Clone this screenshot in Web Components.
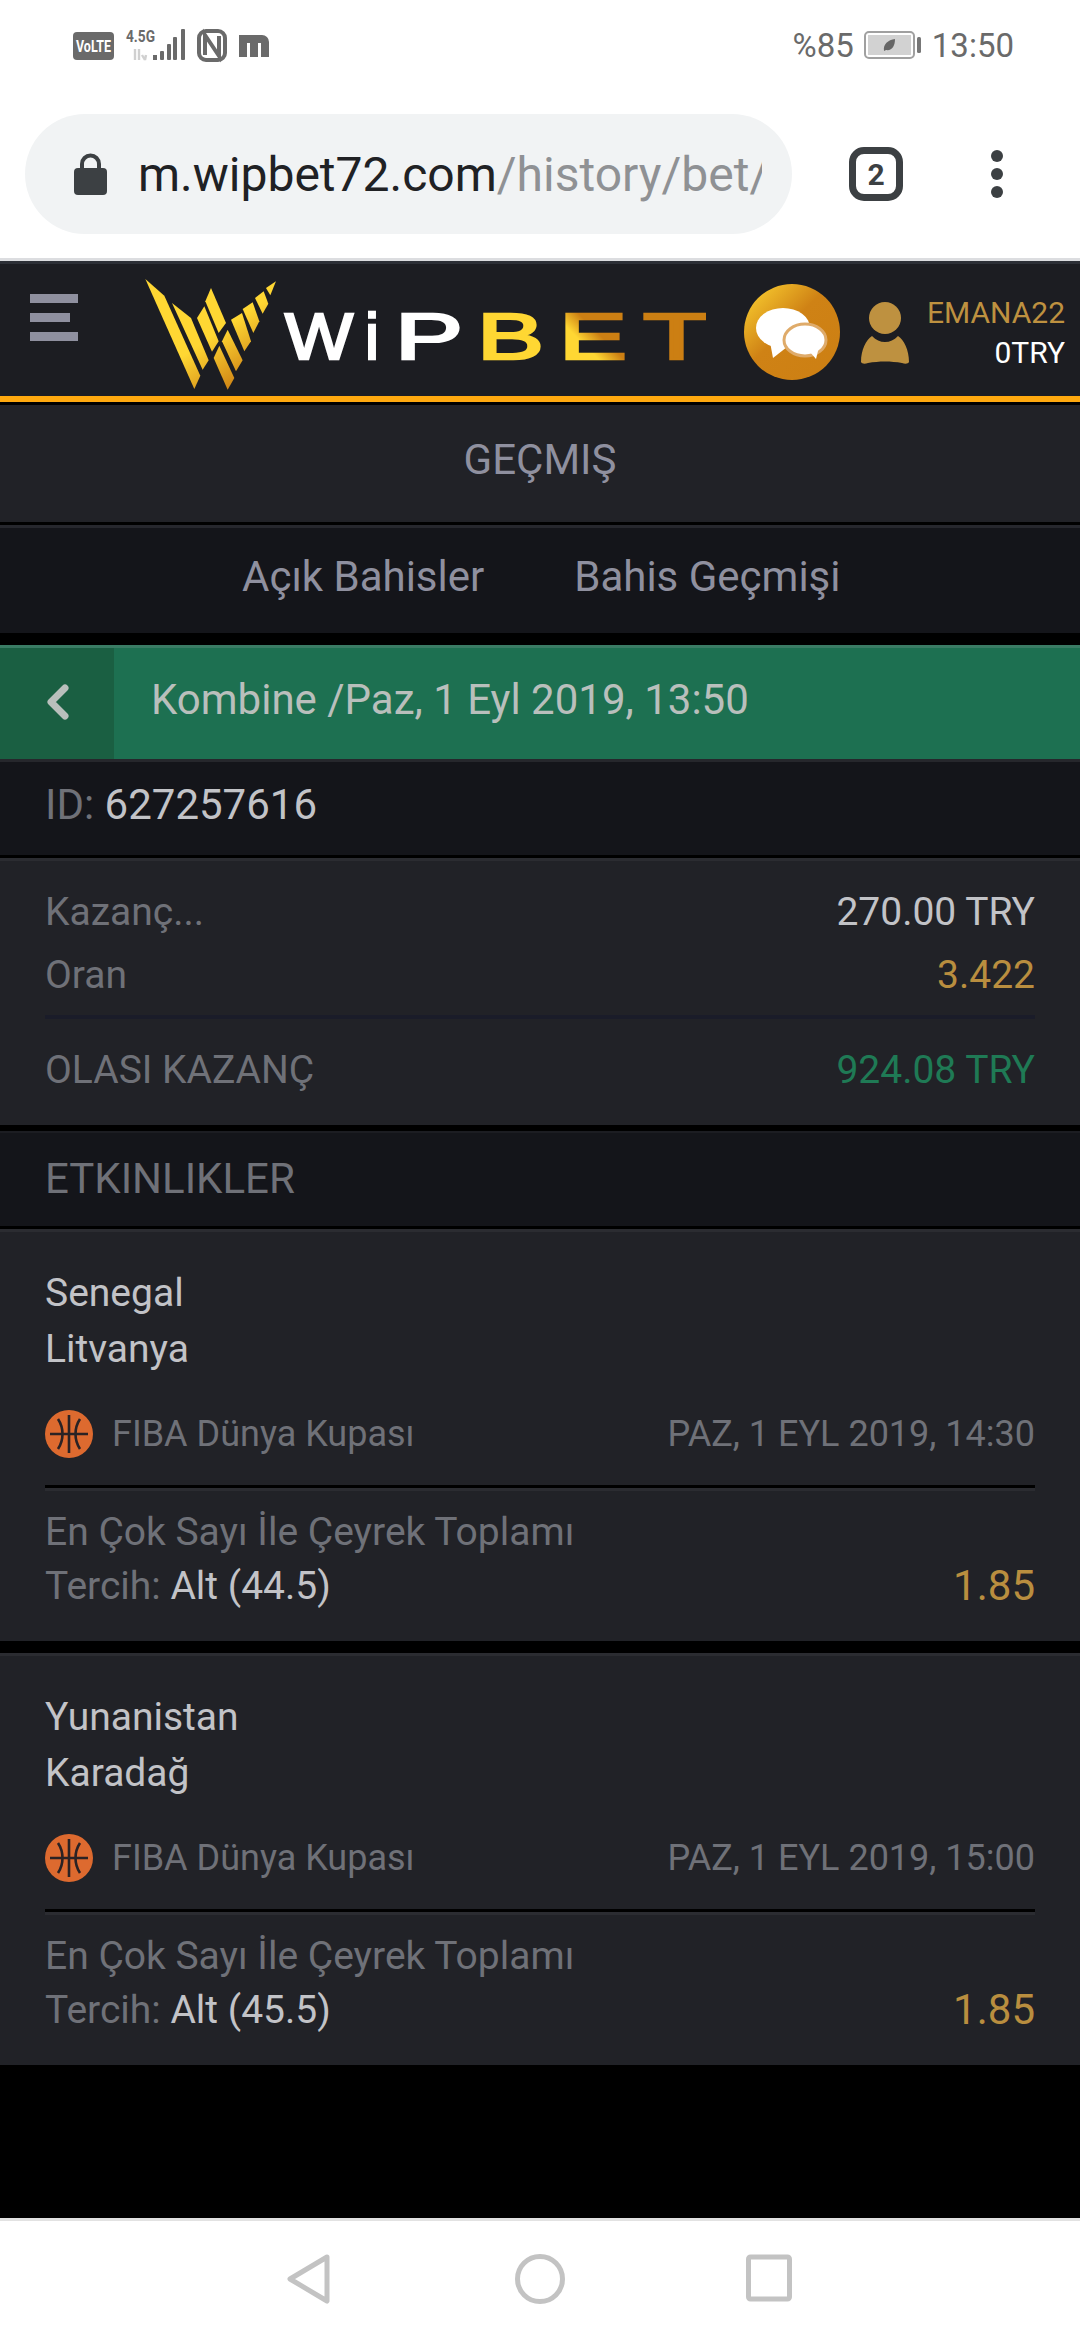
<!DOCTYPE html>
<html lang="tr">
<head>
<meta charset="utf-8">
<title>Bahis Geçmişi</title>
<style>
  html, body { margin: 0; padding: 0; background: #000; }
  body {
    width: 1080px;
    height: 2340px;
    display: flex;
    flex-direction: column;
    overflow: hidden;
    font-family: Roboto, "Liberation Sans", sans-serif;
  }
  main { flex: 1; display: block; background: #000; }
</style>
</head>
<body>
  <status-bar></status-bar>
  <url-bar></url-bar>
  <site-header></site-header>
  <main>
    <page-title>GEÇMIŞ</page-title>
    <tab-row></tab-row>
    <bet-heading>Kombine /Paz, 1 Eyl 2019, 13:50</bet-heading>
    <bet-id>627257616</bet-id>
    <bet-summary></bet-summary>
    <section-title>ETKINLIKLER</section-title>
    <event-card home="Senegal" away="Litvanya" date="PAZ, 1 EYL 2019, 14:30" pick="Alt (44.5)"></event-card>
    <event-card home="Yunanistan" away="Karadağ" date="PAZ, 1 EYL 2019, 15:00" pick="Alt (45.5)" class="next"></event-card>
  </main>
  <nav-bar></nav-bar>

<script>
function define(name, html) {
  customElements.define(name, class extends HTMLElement {
    constructor() {
      super();
      this.attachShadow({ mode: "open" });
      this.shadowRoot.innerHTML = html;
    }
  });
}

define("status-bar", `
  <style>
    :host {
      display: flex;
      align-items: center;
      height: 90px;
      background: #fff;
      color: #6a6a6a;
      font: 33px Roboto, sans-serif;
      padding: 0 66px 0 73px;
      box-sizing: border-box;
    }
    svg { display: block; }
    .right { margin-left: auto; display: flex; align-items: center; }
    .bat { margin: 0 11px 0 10px; }
  </style>
  <svg width="200" height="42" viewBox="0 0 200 42">
    <rect x="0" y="8" width="41" height="28" rx="4" fill="#6a6a6a"/>
    <text x="20.5" y="28" text-anchor="middle" font-family="Roboto" font-weight="700" font-size="17" textLength="35" lengthAdjust="spacingAndGlyphs" fill="#fff">VoLTE</text>
    <text x="53" y="18" font-family="Roboto" font-weight="700" font-size="16" textLength="29" lengthAdjust="spacingAndGlyphs" fill="#6a6a6a">4.5G</text>
    <path d="M62 25v11M66 25v11M72 36l-3-5M72 36l1-5" stroke="#d0d0d0" stroke-width="2.4" fill="none"/>
    <rect x="80" y="31" width="4" height="5" fill="#6a6a6a"/>
    <rect x="87" y="27" width="4" height="9" rx="1" fill="#6a6a6a"/>
    <rect x="94" y="20" width="4" height="16" rx="1" fill="#6a6a6a"/>
    <rect x="100" y="13" width="4" height="23" rx="1" fill="#6a6a6a"/>
    <rect x="108" y="5" width="4" height="31" rx="1" fill="#6a6a6a"/>
    <rect x="126" y="7" width="26" height="29" rx="7" fill="none" stroke="#6a6a6a" stroke-width="4"/>
    <path d="M132 31V11l14 21V12" fill="none" stroke="#6a6a6a" stroke-width="4"/>
    <path d="M170 33V15h19a3 3 0 0 1 3 3v15M181 15v18" fill="none" stroke="#6a6a6a" stroke-width="8"/>
  </svg>
  <div class="right">
    <span>%85</span>
    <svg class="bat" width="57" height="28" viewBox="0 0 57 28">
      <rect x="1" y="1" width="49" height="26" rx="4" fill="none" stroke="#a0a0a0" stroke-width="2"/>
      <rect x="4" y="4" width="43" height="20" fill="#d2d2d2"/>
      <path d="M20 20c-1-7 4-11 11-12 0 7-3 12-9 11z" fill="#666"/>
      <rect x="53" y="6" width="4" height="16" rx="1.500" fill="#777"/>
    </svg>
    <span>13:50</span>
  </div>
`);

define("url-bar", `
  <style>
    :host {
      display: flex;
      align-items: center;
      height: 171px;
      background: #fff;
      padding: 24px 0 24px 25px;
      box-sizing: border-box;
      border-bottom: 3px solid #dcdde0;
    }
    .pill {
      width: 767px;
      height: 120px;
      border-radius: 60px;
      background: #f1f3f4;
      display: flex;
      align-items: center;
      padding-left: 49px;
      box-sizing: border-box;
    }
    .url {
      margin-left: 31px;
      padding-top: 2px;
      width: 624px;
      overflow: hidden;
      white-space: nowrap;
      font: 48px/60px Roboto, sans-serif;
      color: #202124;
    }
    .url span { color: #8f9194; }
    .tabs {
      margin-left: 57px;
      width: 54px;
      height: 54px;
      box-sizing: border-box;
      border: 7px solid #3c4043;
      border-radius: 15px;
      display: flex;
      align-items: center;
      justify-content: center;
      font: 700 30px Roboto, sans-serif;
      color: #3c4043;
    }
    .dots { margin-left: 88px; display: flex; flex-direction: column; gap: 6px; }
    .dots i { display: block; width: 12px; height: 12px; border-radius: 50%; background: #3c4043; }
  </style>
  <div class="pill">
    <svg width="33" height="42" viewBox="0 0 33 42">
      <path d="M8 17v-6a8.500 8.500 0 0 1 17 0v6" fill="none" stroke="#3c4043" stroke-width="4"/>
      <rect x="0" y="15" width="33" height="27" rx="4" fill="#3c4043"/>
    </svg>
    <div class="url">m.wipbet72.com<span>/history/bet/</span></div>
  </div>
  <div class="tabs">2</div>
  <div class="dots"><i></i><i></i><i></i></div>
`);

define("site-header", `
  <style>
    :host {
      display: flex;
      align-items: flex-start;
      height: 141px;
      box-sizing: border-box;
      background: #1c1d22;
      border-top: 3px solid #2c2f36;
      border-bottom: 6px solid #ffa90f;
      padding: 0 15px 0 30px;
    }
    .burger { margin-top: 30px; width: 48px; display: flex; flex-direction: column; gap: 10px; }
    .burger i { display: block; height: 9px; background: #8f909f; }
    .burger i:nth-child(2) { width: 40px; }
    .logo { display: block; margin: 9px 0 0 58px; }
    .chat { display: block; margin: 20px 0 0 38px; }
    .person { display: block; margin: 38px 0 0 21px; }
    .user {
      margin-left: auto;
      padding-top: 29px;
      text-align: right;
      font: 30px/40px Roboto, sans-serif;
      color: #fff;
    }
    .user b { display: block; font-weight: 400; color: #be9140; }
  </style>
  <div class="burger"><i></i><i></i><i></i></div>
  <svg class="logo" width="570" height="125" viewBox="0 0 570 125">
    <defs>
      <linearGradient id="w" gradientUnits="userSpaceOnUse" x1="150" y1="130" x2="300" y2="350">
        <stop offset=".35" stop-color="#ffd733"/><stop offset="1" stop-color="#cc7f13"/>
      </linearGradient>
      <linearGradient id="e" gradientUnits="userSpaceOnUse" x1="444" y1="90" x2="476" y2="58">
        <stop offset=".35" stop-color="#ffd733"/><stop offset=".75" stop-color="#cc7f13"/>
      </linearGradient>
    </defs>
    <g transform="scale(.3333)" fill="url(#w)">
      <polygon points="28,18 85,68 193,308 175,348"/>
      <polygon points="108,90 165,135 218,262 200,290"/>
      <polygon points="183,135 205,100 248,205 228,236"/>
      <polygon points="208,85 225,45 270,150 248,180"/>
      <polygon points="233,255 250,218 295,315 275,350"/>
      <polygon points="258,205 275,170 320,262 300,295"/>
      <polygon points="285,140 318,120 345,205 325,235"/>
      <polygon points="320,108 350,88 370,145 352,180"/>
      <polygon points="357,75 383,55 397,92 380,122"/>
      <polygon points="390,45 420,25 403,67"/>
    </g>
    <text y="86" font-family="Liberation Sans" font-weight="400" font-size="65" fill="#fff" stroke="#fff" stroke-width="2.5"><tspan x="149" textLength="68" lengthAdjust="spacingAndGlyphs">W</tspan><tspan x="229" textLength="14" lengthAdjust="spacingAndGlyphs">i</tspan><tspan x="259" textLength="68" lengthAdjust="spacingAndGlyphs">P</tspan><tspan x="341" textLength="67" lengthAdjust="spacingAndGlyphs" fill="#ffd733" stroke="#ffd733">B</tspan><tspan x="423" textLength="68" lengthAdjust="spacingAndGlyphs" fill="url(#e)" stroke="url(#e)">E</tspan><tspan x="507" textLength="67" lengthAdjust="spacingAndGlyphs" fill="#cc7f13" stroke="#cc7f13">T</tspan></text>
  </svg>
  <svg class="chat" width="96" height="96" viewBox="0 0 96 96">
    <defs>
      <linearGradient id="c" x1="0" y1="0" x2="1" y2="1">
        <stop offset="0" stop-color="#ffd733"/><stop offset=".45" stop-color="#cf8215"/><stop offset="1" stop-color="#cc7f13"/>
      </linearGradient>
    </defs>
    <circle cx="48" cy="48" r="48" fill="url(#c)"/>
    <ellipse cx="39" cy="44" rx="27" ry="20" fill="#fff"/>
    <path d="M26 58l3 16 14-11z" fill="#fff"/>
    <ellipse cx="61" cy="56" rx="21" ry="16" fill="#fff" stroke="#dfab6a" stroke-width="3"/>
    <path d="M66 68l6 7 3-12z" fill="#fff"/>
  </svg>
  <svg class="person" width="48" height="62" viewBox="0 0 48 62">
    <circle cx="24" cy="16" r="16" fill="#be9140"/>
    <path d="M11 34c4 4 8 6 13 6s9-2 13-6c6 4 11 14 11 26-1 2-4 2-7 1-11-2-23-2-34 0-3 1-6 1-7-1 0-12 5-22 11-26z" fill="#be9140"/>
  </svg>
  <div class="user"><b>EMANA22</b>0TRY</div>
`);

define("page-title", `
  <style>
    :host {
      display: block;
      margin-top: 3px;
      height: 117px;
      box-sizing: border-box;
      padding-top: 26px;
      background: #212227;
      text-align: center;
      font: 42px/58px Roboto, sans-serif;
      color: #8f909f;
    }
  </style>
  <slot></slot>
`);

define("tab-row", `
  <style>
    :host {
      display: flex;
      justify-content: flex-start;
      margin-top: 3px;
      height: 108px;
      box-sizing: border-box;
      border-top: 3px solid #26272d;
      background: #14151a;
      padding-left: 242px;
      gap: 90px;
      font: 42px/98px Roboto, sans-serif;
      color: #8f909f;
    }
  </style>
  <span>Açık Bahisler</span><span>Bahis Geçmişi</span>
`);

define("bet-heading", `
  <style>
    :host {
      display: flex;
      margin-top: 12px;
      height: 114px;
      box-sizing: border-box;
      background: #1d7051;
      border-top: 3px solid #3a7c64;
      color: #b9bfbc;
      font: 42px/104px Roboto, sans-serif;
    }
    .back {
      width: 114px;
      background: #1a5f42;
      display: flex;
      justify-content: flex-start;
      padding: 34px 0 0 44px;
      box-sizing: border-box;
    }
    .title { margin-left: 37px; }
  </style>
  <div class="back">
    <svg width="26" height="40" viewBox="0 0 26 40"><path d="M21 6L7 20l14 14" fill="none" stroke="#b9bfbc" stroke-width="7" stroke-linecap="round" stroke-linejoin="round"/></svg>
  </div>
  <div class="title"><slot></slot></div>
`);

define("bet-id", `
  <style>
    :host {
      display: block;
      height: 99px;
      box-sizing: border-box;
      padding-left: 45px;
      background: #14151a;
      border-top: 3px solid #26272c;
      border-bottom: 3px solid #000;
      font: 42px/86px Roboto, sans-serif;
      color: #6f7178;
    }
    span { color: #c2c3c7; }
  </style>
  ID: <span><slot></slot></span>
`);

define("bet-summary", `
  <style>
    :host {
      display: block;
      box-sizing: border-box;
      height: 267px;
      padding: 20px 45px 0;
      background: #212227;
      border-top: 3px solid #2b2c31;
      font: 39px/63px Roboto, sans-serif;
      color: #6f7178;
    }
    .row { display: flex; justify-content: space-between; }
    .hr { height: 4px; margin: 8px 0 20px; background: #1a1c29; }
    .val { color: #c2c3c7; }
    .odd { color: #b98e3f; }
    .win { color: #1f7a55; }
  </style>
  <div class="row"><span>Kazanç...</span><span class="val">270.00 TRY</span></div>
  <div class="row"><span>Oran</span><span class="odd">3.422</span></div>
  <div class="hr"></div>
  <div class="row"><span>OLASI KAZANÇ</span><span class="win">924.08 TRY</span></div>
`);

define("section-title", `
  <style>
    :host {
      display: block;
      margin-top: 6px;
      height: 98px;
      box-sizing: border-box;
      padding-left: 45px;
      background: #14151a;
      border-top: 2px solid #1c1d22;
      border-bottom: 3px solid #000;
      font: 42px/91px Roboto, sans-serif;
      color: #6f7178;
    }
  </style>
  <slot></slot>
`);

customElements.define("event-card", class extends HTMLElement {
  constructor() {
    super();
    this.attachShadow({ mode: "open" });
  }

  connectedCallback() {
    const home = this.getAttribute("home");
    const away = this.getAttribute("away");
    const date = this.getAttribute("date");
    const pick = this.getAttribute("pick");
    this.shadowRoot.innerHTML = `
      <style>
        :host {
          display: block;
          box-sizing: border-box;
          height: 412px;
          padding: 33px 45px 0;
          background: #212227;
          border-top: 3px solid #2b2c31;
          font: 39px/56px Roboto, sans-serif;
          color: #6f7178;
        }
        :host(.next) { margin-top: 12px; }
        .team { color: #c2c3c7; }
        .meta {
          display: flex;
          align-items: center;
          height: 60px;
          margin-top: 27px;
          font-size: 36px;
        }
        .meta svg { margin-right: 19px; }
        .meta .date { margin-left: auto; }
        .hr { height: 3px; margin-top: 21px; background: #000; border-bottom: 3px solid #2b2c31; }
        .market { margin-top: 13px; }
        .pick { display: flex; justify-content: space-between; align-items: center; line-height: 52px; }
        .pick b { font-weight: 400; color: #c2c3c7; }
        .odd { color: #b98e3f; font-size: 42px; }
      </style>
      <div class="team">${home}</div>
      <div class="team">${away}</div>
      <div class="meta">
        <svg width="48" height="48" viewBox="0 0 48 48">
          <circle cx="24" cy="24" r="24" fill="#dd6a2f"/>
          <path d="M24 5v38M5 24h38M13 9c6 9 6 21 0 30M35 9c-6 9-6 21 0 30" fill="none" stroke="#2a2224" stroke-width="2.600"/>
        </svg>
        <span>FIBA Dünya Kupası</span>
        <span class="date">${date}</span>
      </div>
      <div class="hr"></div>
      <div class="market">En Çok Sayı İle Çeyrek Toplamı</div>
      <div class="pick"><span>Tercih: <b>${pick}</b></span><span class="odd">1.85</span></div>
    `;
  }
});

define("nav-bar", `
  <style>
    :host {
      display: flex;
      height: 122px;
      box-sizing: border-box;
      background: #fff;
      border-top: 3px solid #e2e2e2;
      padding: 33px 0 0 287px;
      align-items: flex-start;
    }
    svg { display: block; }
    .home { margin-left: 184px; }
    .recent { margin-left: 181px; }
  </style>
  <svg width="44" height="50" viewBox="0 0 44 50"><path d="M40 3L3 25l37 22z" fill="none" stroke="#c3c3c3" stroke-width="5" stroke-linejoin="round"/></svg>
  <svg class="home" width="50" height="50" viewBox="0 0 50 50"><circle cx="25" cy="25" r="22.500" fill="none" stroke="#c3c3c3" stroke-width="5"/></svg>
  <svg class="recent" width="46" height="48" viewBox="0 0 46 48"><rect x="2.500" y="3" width="41" height="42" rx="2" fill="none" stroke="#c3c3c3" stroke-width="5"/></svg>
`);
</script>
</body>
</html>
